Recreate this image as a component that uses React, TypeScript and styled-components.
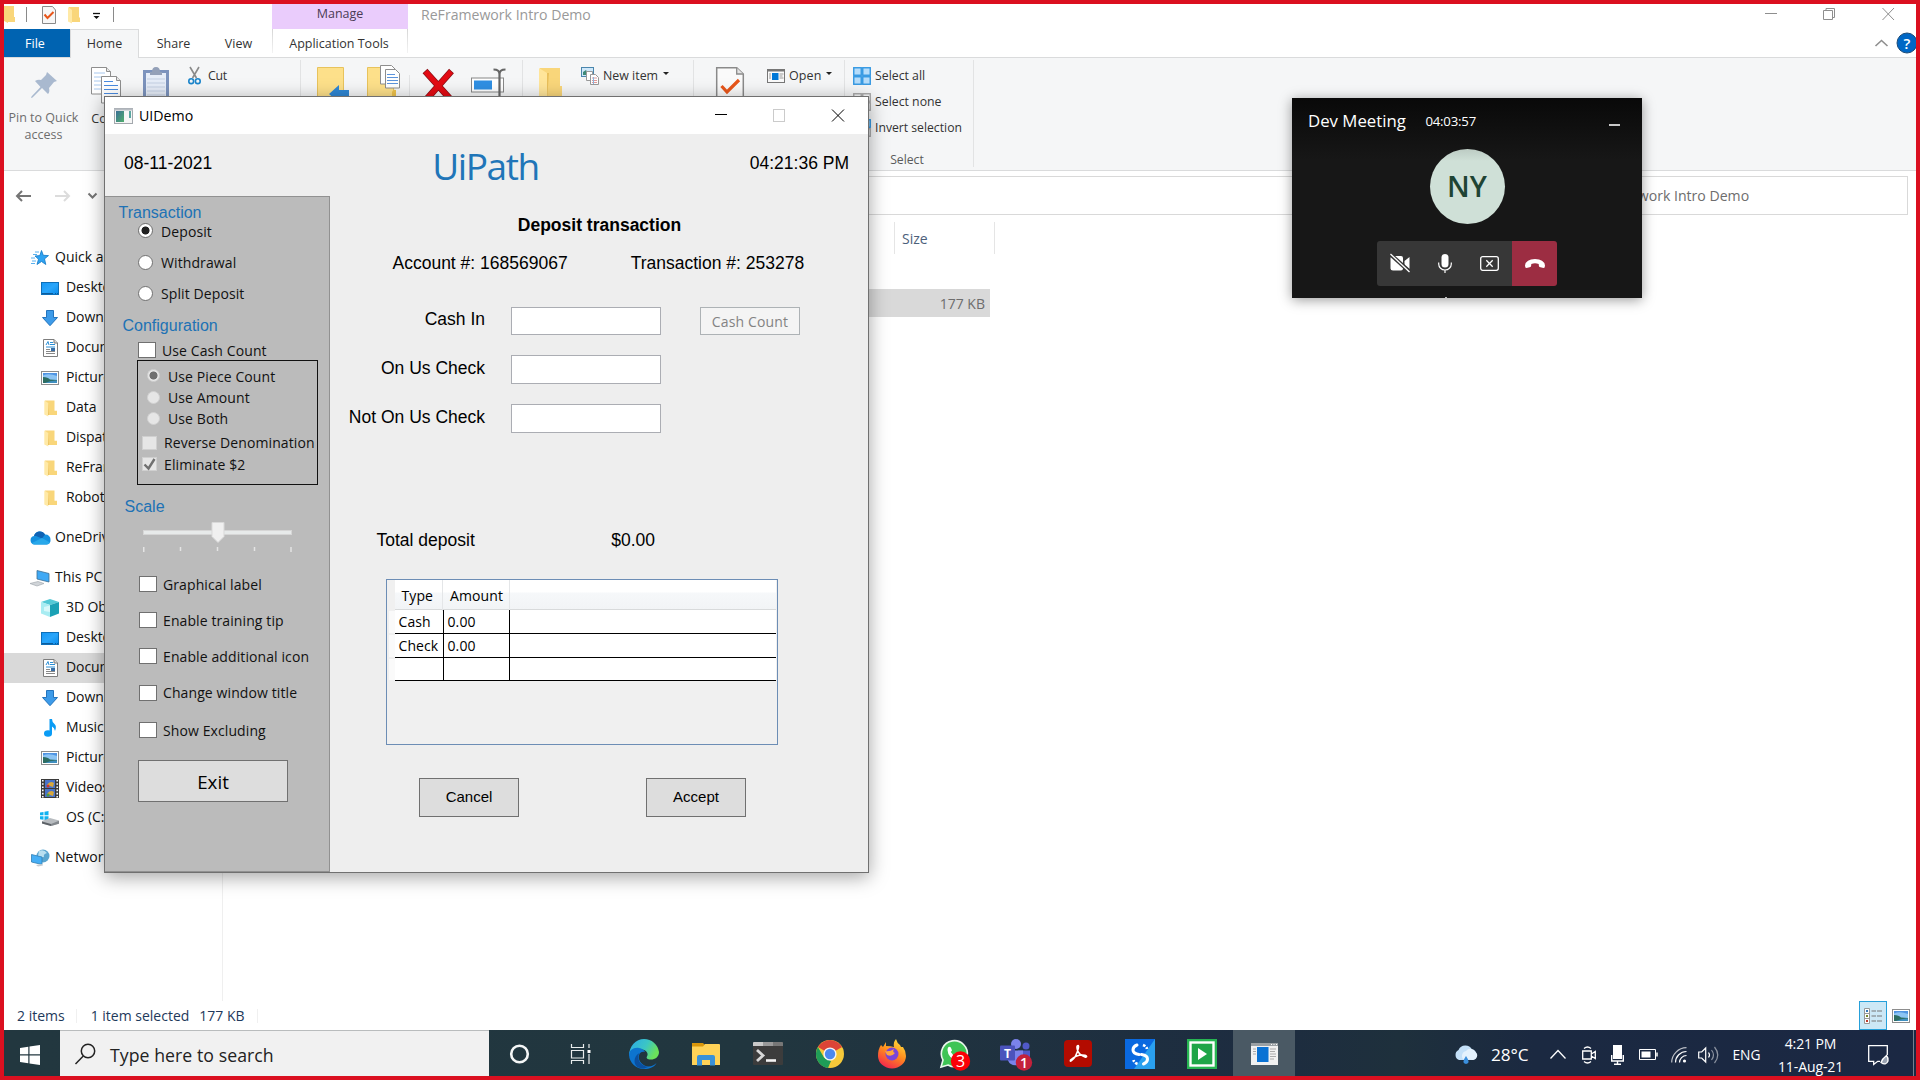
import React from 'react';
import styled, { createGlobalStyle, css } from 'styled-components';

const segoe = `"Open Sans", "Noto Sans", sans-serif`;
const arial = `"Liberation Sans", Arial, sans-serif`;

const GlobalStyle = createGlobalStyle`
  * { box-sizing: border-box; }
  html, body { margin: 0; padding: 0; }
  body { width: 1920px; height: 1080px; overflow: hidden; background: #fff; font-family: ${segoe}; }
`;

/* ---------- shared pieces ---------- */

const Screen = styled.div`
  position: relative;
  width: 1920px;
  height: 1080px;
  border: 4px solid #db1020;
  background: #fff;
  display: flex;
  flex-direction: column;
  overflow: hidden;
  color: #000;
  font: 14px/20px ${segoe};
`;

const Glyph = styled.svg`
  display: block;
  flex: none;
  overflow: visible;
`;

const Label = styled.span<{ $size?: number; $ls?: number; $color?: string; $arial?: boolean; $ml?: number }>`
  display: block;
  flex: none;
  white-space: nowrap;
  font-family: ${p => (p.$arial ? arial : segoe)};
  font-size: ${p => p.$size ?? 14}px;
  letter-spacing: ${p => p.$ls ?? 0}px;
  color: ${p => p.$color ?? 'inherit'};
  margin-left: ${p => p.$ml ?? 0}px;
`;

/* ---------- explorer: title and tabs ---------- */

const TopStrip = styled.header`
  display: flex;
  height: 54px;
  flex: none;
  border-bottom: 1px solid #dadbdc;
`;

const LeftStrip = styled.div`
  width: 268px;
  display: flex;
  flex-direction: column;
`;

const QuickTools = styled.div`
  height: 25px;
  display: flex;
  align-items: flex-start;
`;

const Tabs = styled.nav`
  display: flex;
  height: 29px;
`;

const Tab = styled.div<{ $w: number; $kind?: 'file' | 'active' }>`
  width: ${p => p.$w}px;
  height: ${p => (p.$kind === 'file' ? 28 : 29)}px;
  line-height: 29px;
  text-align: center;
  font-size: 12.5px;
  color: #333;
  ${p => p.$kind === 'file' && css`background: #0063b1; color: #fff; padding-right: 4px;`}
  ${p => p.$kind === 'active' && css`background: #f5f6f7; border: 1px solid #dadbdc; border-bottom: 0; line-height: 28px;`}
`;

const ContextTab = styled.div`
  width: 136px;
  text-align: center;
  font-size: 12.5px;
  color: #333;
`;

const ContextHead = styled.div`
  height: 25px;
  line-height: 20px;
  background: #eaccfc;
  color: #4a3b54;
`;

const ContextName = styled.div`
  height: 24px;
  line-height: 29px;
  padding-right: 2px;
  white-space: nowrap;
  border-left: 1px solid;
  border-right: 1px solid;
  border-image: linear-gradient(#d5d5d5, #f4f4f4) 1;
`;

const WindowTitle = styled.div`
  margin-left: 13px;
  line-height: 21px;
  font-size: 14.1px;
  color: #999;
  flex: 1;
`;

const Corner = styled.div`
  width: 160px;
  display: flex;
  flex-direction: column;
  align-items: flex-end;
`;

/* ---------- explorer: ribbon ---------- */

const Ribbon = styled.section`
  display: flex;
  height: 113px;
  flex: none;
  background: #f5f6f7;
  border-bottom: 1px solid #dadbdc;
  color: #333;
`;

const Group = styled.div<{ $w: number; $pl?: number }>`
  width: ${p => p.$w}px;
  height: 107px;
  margin-top: 2px;
  padding-left: ${p => p.$pl ?? 0}px;
  border-right: 1px solid #e2e3e4;
  display: flex;
  align-items: flex-start;
`;

const BigButton = styled.div<{ $w: number; $pt?: number }>`
  width: ${p => p.$w}px;
  height: 107px;
  padding-top: ${p => p.$pt ?? 7}px;
  display: flex;
  flex-direction: column;
  align-items: center;
  font-size: 12.5px;
  line-height: 17px;
  text-align: center;
  flex: none;
`;

const Caption = styled.div<{ $mt: number; $color?: string }>`
  margin-top: ${p => p.$mt}px;
  color: ${p => p.$color ?? '#333'};
  white-space: nowrap;
`;

const SmallStack = styled.div<{ $pl?: number }>`
  display: flex;
  flex-direction: column;
  padding: 3px 0 0 ${p => p.$pl ?? 0}px;
  flex: none;
`;

const SmallButton = styled.div<{ $gap?: number }>`
  height: 26px;
  display: flex;
  align-items: center;
  gap: ${p => p.$gap ?? 4}px;
  font-size: 12.5px;
  white-space: nowrap;
`;

const GroupName = styled.div`
  margin-top: 9px;
  width: 108px;
  text-align: center;
  font-size: 12.2px;
  line-height: 20px;
  color: #5a5a5a;
`;

const Caret = styled.i`
  width: 0;
  height: 0;
  margin: -6px 0 0 1px;
  border: 3.5px solid transparent;
  border-top-color: #222;
  border-bottom: 0;
`;

/* ---------- explorer: address and files ---------- */

const AddressRow = styled.div`
  height: 47px;
  flex: none;
  display: flex;
  align-items: flex-start;
  padding: 5px 8px 0 0;
`;

const History = styled.div`
  width: 130px;
  height: 39px;
  display: flex;
  align-items: center;
  padding-left: 12px;
`;

const Field = styled.div<{ $w?: number }>`
  height: 39px;
  border: 1px solid #d9d9d9;
  line-height: 37px;
  padding-left: 40px;
  color: #6d6d6d;
  white-space: nowrap;
  ${p => (p.$w ? css`width: ${p.$w}px; flex: none; font-size: 14.1px;` : css`flex: 1;`)}
`;

const Files = styled.main`
  flex: 1;
  display: flex;
  min-height: 0;
`;

const Tree = styled.aside`
  width: 219px;
  padding-top: 25px;
  border-right: 1px solid #efefef;
`;

const TreeRow = styled.div<{ $level: number; $gap?: boolean; $on?: boolean }>`
  height: 30px;
  margin-top: ${p => (p.$gap ? 10 : 0)}px;
  display: flex;
  align-items: center;
  padding-left: ${p => (p.$level ? 36 : 26)}px;
  gap: ${p => (p.$level ? 6 : 5)}px;
  background: ${p => (p.$on ? '#d9d9d9' : 'transparent')};
  letter-spacing: ${p => (p.$level ? -0.1 : 0)}px;
  color: #111;
`;

const TreeName = styled.span`
  padding-bottom: 2px;
  line-height: 20px;
  white-space: nowrap;
`;

const TreeIcon = styled.span`
  width: 20px;
  display: flex;
  justify-content: center;
`;

const List = styled.div`
  flex: 1;
`;

const ListHead = styled.div`
  margin-top: 4px;
  padding-left: 671px;
  height: 32px;
  display: flex;
`;

const SizeHead = styled.div`
  width: 101px;
  border-left: 1px solid #e5e5e5;
  border-right: 1px solid #e5e5e5;
  padding-left: 7px;
  line-height: 33px;
  color: #4c607a;
`;

const FileRow = styled.div`
  margin-top: 35px;
  width: 767px;
  height: 28px;
  line-height: 29px;
  padding-right: 5px;
  text-align: right;
  background: #d9d9d9;
  color: #6d6d6d;
`;

const StatusBar = styled.footer`
  height: 29px;
  flex: none;
  display: flex;
  align-items: center;
  padding-left: 13px;
  color: #1e395b;
`;

const StatusRule = styled.i<{ $m: string }>`
  width: 1px;
  height: 14px;
  margin: ${p => p.$m};
  background: #f0f0f0;
`;

const ViewButton = styled.div`
  margin-left: auto;
  width: 28px;
  height: 29px;
  border: 1px solid #26a0da;
  background: #cce8f6;
  display: flex;
  align-items: center;
  justify-content: center;
`;

const ThumbButton = styled.div`
  width: 29px;
  padding-left: 5px;
`;

/* ---------- taskbar ---------- */

const Taskbar = styled.div`
  height: 46px;
  flex: none;
  display: flex;
  background: linear-gradient(90deg, #22373f 0%, #21363f 40%, #1d2c40 66%, #1e303c 73%, #1b2941 80%, #1b2843 100%);
  color: #fff;
`;

const StartButton = styled.div`
  width: 56px;
  padding: 15px 0 0 16px;
`;

const SearchBox = styled.div`
  width: 429px;
  background: #f1f1f1;
  border-top: 1px solid #b9bcbd;
  display: flex;
  align-items: center;
  padding: 2px 0 0 15px;
  color: #222;
`;

const AppCell = styled.div<{ $on?: boolean }>`
  width: 62px;
  display: flex;
  align-items: center;
  justify-content: center;
  padding-top: 1px;
  background: ${p => (p.$on ? '#4a5964' : 'transparent')};
`;

const Tray = styled.div`
  flex: 1;
  display: flex;
  align-items: center;
  padding: 3px 0 0 158px;
`;

const Slot = styled.div<{ $w: number }>`
  width: ${p => p.$w}px;
  flex: none;
  display: flex;
`;

const Clock = styled.div`
  width: 100px;
  height: 46px;
  text-align: center;
  font-size: 14px;
  line-height: 23px;
  margin: -4px 7px 0 0;
  padding-top: 2px;
  letter-spacing: -0.1px;
`;

const DesktopEdge = styled.i`
  margin: -3px 0 0 auto;
  width: 3px;
  height: 46px;
  border-left: 1px solid #76808f;
`;

/* ---------- UIDemo window ---------- */

const DemoWindow = styled.div`
  position: absolute;
  left: 100px;
  top: 92px;
  width: 765px;
  height: 777px;
  border: 1px solid #707070;
  background: #eee;
  box-shadow: 0 4px 18px rgba(0, 0, 0, 0.36);
  display: flex;
  flex-direction: column;
`;

const DemoTitle = styled.div`
  height: 37px;
  flex: none;
  background: #fff;
  display: flex;
  align-items: center;
  padding: 0 23px 0 9px;
`;

const TitleControls = styled.div`
  margin-left: auto;
`;

const DemoHeader = styled.div`
  height: 62px;
  flex: none;
  display: flex;
  align-items: center;
  padding: 0 19px 4px 19px;
`;

const Logo = styled.div`
  margin: 5px 0 0 220px;
  font-size: 37px;
  line-height: 50px;
  letter-spacing: -1.4px;
  color: #2075b8;
`;

const TimeLabel = styled.div`
  margin-left: auto;
  font: 17.5px/20px ${arial};
  white-space: nowrap;
`;

const DemoBody = styled.div`
  flex: 1;
  display: flex;
  min-height: 0;
`;

const Panel = styled.div`
  width: 225px;
  background: #bbb;
  border: 1px solid #919191;
  border-left: 0;
  display: flex;
  flex-direction: column;
`;

const Heading = styled.div<{ $mt: number; $ml: number }>`
  margin: ${p => p.$mt}px 0 0 ${p => p.$ml}px;
  height: 20px;
  font: 16px/20px ${arial};
  color: #2072b5;
`;

const Option = styled.div<{ $mt: number; $ml: number; $gap: number; $up?: boolean }>`
  margin: ${p => p.$mt}px 0 0 ${p => p.$ml}px;
  height: 16px;
  display: flex;
  align-items: flex-start;
  gap: ${p => p.$gap}px;
  line-height: ${p => (p.$up ? 16 : 18)}px;
  letter-spacing: 0.1px;
  white-space: nowrap;
  color: #111;
`;

const Radio = styled.i<{ $on?: boolean; $dim?: boolean }>`
  width: ${p => (p.$dim ? 13 : 15)}px;
  height: ${p => (p.$dim ? 13 : 15)}px;
  margin-top: ${p => (p.$dim ? 1 : 0)}px;
  flex: none;
  border-radius: 50%;
  border: 1px solid ${p => (p.$dim ? '#d2d2d2' : '#707070')};
  background: ${p => {
    const base = p.$dim ? '#e6e6e6' : '#fff';
    const dot = p.$dim ? '#707070' : '#212121';
    return p.$on ? `radial-gradient(circle, ${dot} 0 3.6px, ${base} 4.4px)` : base;
  }};
`;

const Check = styled.i<{ $dim?: boolean }>`
  width: ${p => (p.$dim ? 15 : 18)}px;
  height: ${p => (p.$dim ? 14 : 16)}px;
  margin-top: ${p => (p.$dim ? 1 : 0)}px;
  flex: none;
  display: block;
  border: 1px solid ${p => (p.$dim ? '#d0d0d0' : '#707070')};
  background: ${p => (p.$dim ? '#e6e6e6' : '#fff')};
`;

const SubBox = styled.div`
  margin: 2px 0 0 32px;
  width: 181px;
  height: 125px;
  flex: none;
  border: 1px solid #111;
`;

const SliderSlot = styled.div`
  margin: 5px 0 0 38px;
  height: 32px;
  flex: none;
`;

const Button = styled.div<{ $w: number; $h: number; $kind?: 'exit' | 'dim' }>`
  width: ${p => p.$w}px;
  height: ${p => p.$h}px;
  flex: none;
  display: flex;
  align-items: center;
  justify-content: center;
  padding: 0 0 2px 0;
  background: #ddd;
  border: 1px solid #707070;
  font: 15px/20px ${arial};
  ${p => p.$kind === 'exit' && css`margin: 22px 0 0 33px; padding: 1px 0 0 0; font: 18.8px/24px ${segoe};`}
  ${p => p.$kind === 'dim' && css`padding: 2px 0 0 0; background: #f4f4f4; border-color: #adb2b5; color: #838383; font: 14px/20px ${segoe}; letter-spacing: 0.15px;`}
`;

const Form = styled.div`
  flex: 1;
  display: flex;
  flex-direction: column;
  font: 17.5px/20px ${arial};
`;

const FormTitle = styled.div`
  margin: 19px 0 0 1px;
  text-align: center;
  font-weight: 700;
`;

const Line = styled.div<{ $mt: number; $pl: number }>`
  margin-top: ${p => p.$mt}px;
  padding-left: ${p => p.$pl}px;
  display: flex;
  white-space: nowrap;
`;

const Entry = styled.div<{ $mt: number; $h: number }>`
  margin-top: ${p => p.$mt}px;
  height: ${p => p.$h}px;
  display: grid;
  grid-template-columns: 155px 150px 100px;
  column-gap: 26px;
`;

const EntryLabel = styled.label<{ $low?: boolean }>`
  text-align: right;
  line-height: ${p => (p.$low ? 27 : 25)}px;
  white-space: nowrap;
`;

const Input = styled.div`
  background: #fff;
  border: 1px solid #abadb3;
`;

const DimSlot = styled.div`
  padding-left: 13px;
`;

const Grid = styled.div`
  margin: 29px 0 0 56px;
  width: 392px;
  height: 166px;
  flex: none;
  border: 1px solid #6c8db5;
  background: #f0f0f0;
  padding: 0 1px 0 8px;
  font: 14px/20px ${segoe};
`;

const GridHead = styled.div`
  height: 30px;
  display: grid;
  grid-template-columns: 48px 67px 1fr;
  background: linear-gradient(#fff 0 12px, #f6f8fa 13px, #f2f4f6);
  border-bottom: 1px solid #d8dadb;
`;

const GridHeadCell = styled.div`
  border-right: 1px solid #e4e6e8;
  padding-left: 6.5px;
  line-height: 31px;
  letter-spacing: 0.1px;
  & + & { padding-left: 7px; }
  &:last-child { border-right: 0; }
`;

const GridRow = styled.div`
  height: 24px;
  display: grid;
  grid-template-columns: 49px 66px 1fr;
  background: #fff;
  border-bottom: 1px solid #000;
  box-shadow: -7px 0 0 -1px #fafafa;
  &:last-child { height: 23px; }
`;

const GridCell = styled.div`
  border-right: 1px solid #000;
  padding-left: 3.5px;
  line-height: 24px;
  letter-spacing: 0.1px;
  &:last-child { border-right: 0; }
`;

const Actions = styled.div`
  margin-top: 33px;
  padding-left: 89px;
  display: flex;
  gap: 127px;
`;

/* ---------- meeting window ---------- */

const Meeting = styled.div`
  position: absolute;
  left: 1288px;
  top: 94px;
  width: 350px;
  height: 200px;
  background: linear-gradient(#090909, #171717 62px);
  box-shadow: 0 2px 12px rgba(0, 0, 0, 0.4);
  color: #fff;
  display: flex;
  flex-direction: column;
  align-items: center;
`;

const MeetingHead = styled.div`
  width: 100%;
  height: 51px;
  display: flex;
  align-items: center;
  padding: 0 22px 6px 16px;
`;

const Minimise = styled.i`
  margin: 9px 0 0 auto;
  width: 11px;
  height: 2px;
  background: #c8c8c8;
`;

const Avatar = styled.div`
  width: 75px;
  height: 75px;
  border-radius: 50%;
  background: linear-gradient(#bccbc3, #cfe0d7 12px);
  color: #1f4433;
  font: 600 29px/74px ${segoe};
  text-align: center;
`;

const CallBar = styled.div`
  margin-top: 17px;
  display: flex;
  border-radius: 3px;
  overflow: hidden;
`;

const CallButton = styled.div<{ $end?: boolean }>`
  width: 45px;
  height: 45px;
  display: flex;
  align-items: center;
  justify-content: center;
  background: ${p => (p.$end ? '#9c2d42' : '#373737')};
`;

const Handle = styled.i`
  width: 2px;
  height: 1px;
  margin: auto 43px 0 0;
  background: #bbb;
`;

/* ---------- drawings ---------- */

const FolderIcon = () => (
  <Glyph width="13" height="17">
    <path d="M1 .5h9.500v10.200H13V15H1z" fill="#f9d67a" />
    <path d="M.3.5 4.300 3v13.600L.3 14.600z" fill="#ffe9a6" />
    <path d="M4.300 3 5 15H4.300z" fill="#e3b64f" />
  </Glyph>
);

const LargeFolder = () => (
  <Glyph width="24" height="40">
    <path d="M1 8h20v18h2v14H1z" fill="#f9d67a" />
    <path d="m0 8 8 5v27H0z" fill="#ffe59a" />
    <path d="M8 13v27l2-27z" fill="#e9bf5a" />
  </Glyph>
);

const PageCheck = () => (
  <Glyph width="28" height="36">
    <path d="M.7.7h20L27.300 7v28.300H.7z" fill="#fafafa" stroke="#8a8a8a" strokeWidth="1.500" />
    <path d="M20.700.7V7h6.600" fill="#e4e4e4" stroke="#8a8a8a" strokeWidth="1.300" />
    <path d="m5.500 19 5.500 6L23 13" fill="none" stroke="#e8561a" strokeWidth="3.200" />
  </Glyph>
);

const PageStack = () => (
  <Glyph width="30" height="36">
    <path d="M.5.5h15l4 4V27H.5z" fill="#fff" stroke="#8e8e8e" />
    <path d="M15.500.5v4h4" fill="#e8e8e8" stroke="#8e8e8e" />
    <path d="M3 6h11M3 10h13M3 14h13M3 18h8M3 22h8" stroke="#a8c8ee" />
    <path d="M10.500 9.500h15l4 4V36h-19z" fill="#fff" stroke="#8e8e8e" />
    <path d="M25.500 9.500v4h4" fill="#e8e8e8" stroke="#8e8e8e" />
    <path d="M13 14.500h9M13 18.500h14M13 22.500h14M13 26.500h14M13 30.500h14" stroke="#4a8be0" strokeWidth="1.200" />
  </Glyph>
);

const MonitorIcon = () => (
  <Glyph width="18" height="13">
    <defs><linearGradient id="mon" x1="0" y1="0" x2="1" y2="1"><stop offset="0" stopColor="#1496f5" /><stop offset=".5" stopColor="#2aa6fb" /><stop offset="1" stopColor="#0a8ceb" /></linearGradient></defs>
    <rect x=".5" y=".5" width="17" height="12" fill="url(#mon)" stroke="#0e6fb8" />
    <path d="M1 11.500h11M14 11.500h1M16 11.500h1" stroke="#0b5c9c" />
  </Glyph>
);

const DownIcon = () => (
  <Glyph width="16" height="16"><path d="M4.500.5h7v7h4L8 15.700.5 7.500h4z" fill="#3d9be9" stroke="#2474bd" /></Glyph>
);

const DocIcon = () => (
  <Glyph width="15" height="18">
    <path d="M.5.5h10.500L14.500 4v13.500H.5z" fill="#fff" stroke="#7d7d7d" />
    <path d="M11 .5V4h3.500" fill="#ddd" stroke="#7d7d7d" />
    <path d="M3 6 5 2.500 6 6M7 3.500h3M7 5.500h5M3 8h9" stroke="#2b8fd6" fill="none" />
    <path d="M3 10.500h4M3 12.500h9M3 14.500h9" stroke="#888" />
    <rect x="8" y="9" width="4" height="3" fill="#3a6ea5" />
  </Glyph>
);

const PictureIcon = () => (
  <Glyph width="18" height="14">
    <rect x=".5" y=".5" width="17" height="13" fill="#fff" stroke="#8d8d8d" />
    <rect x="2" y="2" width="14" height="10" fill="#8cc4f4" />
    <path d="M2 4.500q6-2.500 14 .5V2H2z" fill="#4f94e2" />
    <path d="M2 6q5 0 7 2.500l7 .5v3H2z" fill="#2c6d62" />
    <path d="M4 12q6-3 12-2.500V12z" fill="#3f8fc0" />
  </Glyph>
);

const StarIcon = () => (
  <Glyph width="18" height="16">
    <path d="m10.500.5 1.800 4.800 5.200.3-4 3.300 1.300 5.600-4.300-3-4.500 3 1.500-5.300L4 6l4.800-.4z" fill="#2ea3f2" stroke="#1478c4" strokeWidth=".8" />
    <path d="M4 2h4M2 4.500h4M0 8h4M1 11h4M0 13.500h4" stroke="#58b0ee" />
  </Glyph>
);

const CloudIcon = () => (
  <Glyph width="21" height="14">
    <path d="M4.500 13.500A4.300 4.300 0 0 1 4 5a6 6 0 0 1 11-1.500 5 5 0 0 1 5.500 5.500 4 4 0 0 1-3.500 4.500z" fill="#1490df" />
    <path d="M4 5a6 6 0 0 1 11-1.500l-3 4L6 5z" fill="#0f62b4" />
    <path d="m2 12 10-5 8 4.500q-1 2-3.500 2h-12q-1.500 0-2.500-1.500z" fill="#28a8ea" />
  </Glyph>
);

const PcIcon = () => (
  <Glyph width="20" height="17">
    <path d="M7 .5 19 3.500V12L7 9z" fill="#3fa9f5" stroke="#3d6f93" strokeWidth=".8" />
    <path d="M0 13.500 8 11.500l6 2-7 2.500z" fill="#d0d4d8" stroke="#9aa1a8" strokeWidth=".6" />
  </Glyph>
);

const CubeIcon = () => (
  <Glyph width="18" height="18">
    <path d="m0 3 9-3 9 3-9 3z" fill="#54c9d6" />
    <path d="m0 3 9 3v12l-9-3.500z" fill="#a8ecf2" />
    <path d="m18 3-9 3v12l9-3.500z" fill="#1ba1b5" />
    <path d="m3 8 6-1.500V13L3 12z" fill="#d8f8fa" />
  </Glyph>
);

const MusicIcon = () => (
  <Glyph width="12" height="18"><ellipse cx="4" cy="14.500" rx="4" ry="3.200" fill="#0a9cf5" /><path d="M5.500 0H8q0 3 2.500 5T11 12q-.5-3.500-3-4.500v7H5.500z" fill="#0a9cf5" /></Glyph>
);

const VideoIcon = () => (
  <Glyph width="18" height="19">
    <rect width="18" height="19" fill="#3a3a3a" /><rect x="4" y="1" width="10" height="8" fill="#4a74c9" /><rect x="4" y="10" width="10" height="8" fill="#4a74c9" />
    <path d="M6 6q3-5 7-2l-1 4zM6 15q3-5 7-2l-1 4z" fill="#d8a83c" /><circle cx="7" cy="7" r="1.500" fill="#c33" /><circle cx="7" cy="16" r="1.500" fill="#4c9c3c" />
    <path d="M1.800 1v18M16.200 1v18" stroke="#fff" strokeWidth="1.600" strokeDasharray="1.600 1.600" />
  </Glyph>
);

const DriveIcon = () => (
  <Glyph width="20" height="15">
    <path d="M0 1.500 3.500 1v3.300H0zM4.500.8 8.500 0v4.300h-4zM0 5.300h3.500V8.800L0 8.300zM4.500 5.300h4V9.500l-4-.6z" fill="#10b2f0" />
    <path d="m2 10 8-3 9 2.500v3L11 15l-9-2.500z" fill="#b8bcc0" /><path d="m2 10.500 9 2.500v2l-9-2.500z" fill="#5c6166" /><path d="m11 13 8-3.300v3L11 15z" fill="#83888d" />
  </Glyph>
);

const NetworkIcon = () => (
  <Glyph width="19" height="18">
    <circle cx="12" cy="7" r="6.500" fill="#5aa5cf" /><path d="M8 2q5-2 8 2-4 1-3 4-4 1-6-1z" fill="#b9dff0" />
    <path d="M.5 5.500 11 8v7.500L.5 13z" fill="#45aef5" stroke="#2f7db4" strokeWidth=".8" /><path d="m5 16 6-1 1 1.500-5 1z" fill="#c6ccd0" />
  </Glyph>
);

const treeItems: { name: string; icon: React.ReactNode; level: number; gap?: boolean; on?: boolean }[] = [
  { name: 'Quick access', icon: <StarIcon />, level: 0 },
  { name: 'Desktop', icon: <MonitorIcon />, level: 1 },
  { name: 'Downloads', icon: <DownIcon />, level: 1 },
  { name: 'Documents', icon: <DocIcon />, level: 1 },
  { name: 'Pictures', icon: <PictureIcon />, level: 1 },
  { name: 'Data', icon: <FolderIcon />, level: 1 },
  { name: 'Dispatcher', icon: <FolderIcon />, level: 1 },
  { name: 'ReFramework', icon: <FolderIcon />, level: 1 },
  { name: 'Robots', icon: <FolderIcon />, level: 1 },
  { name: 'OneDrive', icon: <CloudIcon />, level: 0, gap: true },
  { name: 'This PC', icon: <PcIcon />, level: 0, gap: true },
  { name: '3D Objects', icon: <CubeIcon />, level: 1 },
  { name: 'Desktop', icon: <MonitorIcon />, level: 1 },
  { name: 'Documents', icon: <DocIcon />, level: 1, on: true },
  { name: 'Downloads', icon: <DownIcon />, level: 1 },
  { name: 'Music', icon: <MusicIcon />, level: 1 },
  { name: 'Pictures', icon: <PictureIcon />, level: 1 },
  { name: 'Videos', icon: <VideoIcon />, level: 1 },
  { name: 'OS (C:)', icon: <DriveIcon />, level: 1 },
  { name: 'Network', icon: <NetworkIcon />, level: 0, gap: true },
];

const SelectIcon = ({ kind }: { kind: 'all' | 'none' | 'invert' }) => {
  const cells = [[0, 0], [9, 0], [0, 9], [9, 9]];
  return (
    <Glyph width="18" height="18">
      {cells.map(([x, y], i) => {
        const blue = kind === 'all' || (kind === 'invert' && i === 1);
        return <rect key={i} x={x + 0.75} y={y + 0.75} width="7.5" height="7.5" fill={blue ? '#b5dcfa' : '#f5f6f7'} stroke={blue ? '#3297e2' : '#a8a8a8'} strokeWidth="1.4" />;
      })}
    </Glyph>
  );
};

const NewItemIcon = () => (
  <Glyph width="18" height="18">
    <rect x=".5" y=".5" width="12" height="9" fill="#cfe8fa" stroke="#4a86ad" /><path d="M2 8V5l3-2 3 5z" fill="#3d8a78" />
    <path d="M5.500 4.500h6v9h-6z" fill="#fff" stroke="#999" /><path d="M9.500 7.500h5l3 3v7h-8z" fill="#fff" stroke="#999" />
    <path d="M11 11h5M11 13.500h5M11 15.500h5" stroke="#e09a9a" /><path d="M12.500 10v7" stroke="#8ab6e0" />
  </Glyph>
);

const OpenIcon = () => (
  <Glyph width="18" height="14">
    <rect x=".5" y=".5" width="17" height="13" fill="#fafafa" stroke="#777" /><path d="M0 1.500h18" stroke="#777" strokeWidth="2" />
    <rect x="5" y="4" width="6.500" height="7" fill="#0078d7" /><path d="M2 5h2M2 7h2M2 9h2M12.500 5h4M12.500 7h3M12.500 9h4" stroke="#999" />
  </Glyph>
);

const appIcons: { id: string; on?: boolean; icon: React.ReactNode }[] = [
  { id: 'cortana', icon: <Glyph width="20" height="20"><circle cx="9.500" cy="10" r="8.300" fill="none" stroke="#f4f6f6" strokeWidth="2.600" /></Glyph> },
  { id: 'tasks', icon: (
    <Glyph width="25" height="20" stroke="#e8ecec" fill="none">
      <path d="M1.500 0v3.500h12V0M1.500 20v-3.500h12V20M1.500 6.500h12v7.500h-12zM19 0v4M19 10v10" strokeWidth="1.200" /><rect x="17.500" y="6" width="3" height="3" fill="#fff" stroke="none" />
    </Glyph>) },
  { id: 'edge', icon: (
    <Glyph width="30" height="30" viewBox="0 0 30 30">
      <defs><linearGradient id="eg" x1="0" y1="0" x2="1" y2=".4"><stop offset="0" stopColor="#2aa9ea" /><stop offset=".6" stopColor="#3cc6c4" /><stop offset="1" stopColor="#6be25a" /></linearGradient></defs>
      <path d="M15 0a15 15 0 0 1 15 13c0 5-4 7.500-8 7.500-4 0-5-1.500-4-3 2-3-1-7-5-7C7 10.500 1 14 0 17 0 7 7 0 15 0z" fill="url(#eg)" />
      <path d="M0 16c0-5 5-8 10-7 3 .5 5 2 6 4-4-1.500-7 2-6 7 1 4 5 7 9 7.500 3 .3 6-1 8.500-3.500-2 4-7 6-12.500 6A15 15 0 0 1 0 16z" fill="#0d74cf" />
      <path d="M10.500 14C7 19 11 27 19 28c-3 2-9 2.500-12-1.500-3-4-1-10.500 3.500-12.500z" fill="#0b4f9e" />
    </Glyph>) },
  { id: 'explorer', icon: (
    <Glyph width="28" height="24">
      <path d="M0 1h11l3 3v3H0z" fill="#d9960a" /><path d="M0 4.500h11L13 2h14q1 0 1 1v20H0z" fill="#ffd257" />
      <path d="M5 23.500V15q0-2 2-2h14q2 0 2 2v8.500h-5V18h-8v5.500z" fill="#3a91d8" />
    </Glyph>) },
  { id: 'terminal', icon: (
    <Glyph width="30" height="23">
      <rect width="30" height="23" rx="1" fill="#3c3c3c" /><path d="M0 1q0-1 1-1h9v4H0z" fill="#c9c9c9" /><path d="M10 0h10v4H10z" fill="#999" /><path d="M20 0h9q1 0 1 1v3H20z" fill="#777" />
      <path d="m4 8 6 5.500L4 19" fill="none" stroke="#d8d8d8" strokeWidth="2.800" /><path d="M13 18.500h10" stroke="#f4f4f4" strokeWidth="2.600" />
    </Glyph>) },
  { id: 'chrome', icon: (
    <Glyph width="28" height="28" viewBox="0 0 28 28">
      <circle cx="14" cy="14" r="14" fill="#f6c93a" />
      <path d="M14 14 1.900 7A14 14 0 0 1 26.100 7z" fill="#dc4437" />
      <path d="M1.900 7 8 17.500l7 3.500-3 7A14 14 0 0 1 1.900 7z" fill="#1f9d57" />
      <circle cx="14" cy="14" r="6.600" fill="#f4f6f6" /><circle cx="14" cy="14" r="5.200" fill="#4a89f0" />
    </Glyph>) },
  { id: 'firefox', icon: (
    <Glyph width="28" height="29" viewBox="0 0 28 29">
      <defs><linearGradient id="ff" x1=".8" y1="0" x2=".3" y2="1"><stop offset="0" stopColor="#ffe23c" /><stop offset=".5" stopColor="#ff8a1e" /><stop offset="1" stopColor="#f5254e" /></linearGradient></defs>
      <path d="M3 6l2 2 3-5v4q5 0 8 1-1-5 2-8 1 4 4 6l1 2h2q3 4 3 9a14 12.500 0 0 1-28 0Q0 10 3 6z" fill="url(#ff)" />
      <circle cx="14" cy="15" r="6.500" fill="#7b45d8" /><path d="M7 12q5 1 9-2-2 3 1 4-3 4-8 2z" fill="#ffa63c" />
    </Glyph>) },
  { id: 'whatsapp', icon: (
    <Glyph width="30" height="30" viewBox="0 0 30 30">
      <path d="M2 28 4 21A13 13 0 1 1 9 26z" fill="#3fc455" stroke="#eaf6ec" strokeWidth="1.600" />
      <path d="M9.500 8q2-1 3 2l.5 1.500-1.200 1.600q2 3.500 5 4.400L19 16l4 2q-1 4-5 3.500Q9 19 8.500 11q0-2 1-3z" fill="#fff" />
      <circle cx="21.500" cy="22" r="9.700" fill="#fb0007" />
      <text x="21.500" y="27.500" fill="#fff" fontSize="16" textAnchor="middle" fontFamily="Open Sans, sans-serif">3</text>
    </Glyph>) },
  { id: 'teams', icon: (
    <Glyph width="32" height="30" viewBox="0 0 32 30">
      <circle cx="16" cy="5" r="5" fill="#7b83eb" /><circle cx="26" cy="7" r="3.500" fill="#5059c9" />
      <path d="M18 11.500h12v8a6 6 0 0 1-12 2z" fill="#5059c9" /><path d="M8 11.500h15v9a8 8 0 0 1-15 1z" fill="#7b83eb" />
      <rect y="6.500" width="15" height="15" rx="1" fill="#4b53bc" />
      <text x="7.500" y="18.500" fill="#fff" fontSize="12" fontWeight="700" textAnchor="middle" fontFamily="Open Sans, sans-serif">T</text>
      <circle cx="24" cy="23.500" r="8.200" fill="#c4213b" /><text x="24" y="28.500" fill="#fff" fontSize="14" fontWeight="600" textAnchor="middle" fontFamily="Open Sans, sans-serif">1</text>
    </Glyph>) },
  { id: 'acrobat', icon: (
    <Glyph width="28" height="27"><rect width="28" height="27" rx="4" fill="#b30b00" /><path d="M14 5.500q-1.800 0-.6 4.500 1.600 5 8.100 7.200 2.500-.6-.5-2Q13 14 6.500 20q-.8 2 1 .6 4.500-3 6.800-12.100.7-3-.3-3z" fill="none" stroke="#fff" strokeWidth="1.500" /></Glyph>) },
  { id: 'studio', icon: (
    <Glyph width="30" height="30">
      <rect width="30" height="30" fill="#0a69e0" /><path d="M30 0v30H9z" fill="#2aa0ef" />
      <path d="M12 6Q8 7.500 8 11q0 3.500 6 4.500M18.500 25Q22.500 23.500 22.500 20q0-3.500-6-4.500" fill="none" stroke="#fff" strokeWidth="3" strokeLinecap="round" />
      <path d="M18 6q3.500 1.500 4 4M12.500 25q-3.500-1.500-4-4" fill="none" stroke="#fff" strokeWidth="2.600" strokeDasharray="2.600 1.400" />
    </Glyph>) },
  { id: 'robot', icon: (
    <Glyph width="30" height="30"><rect width="30" height="30" fill="#27b552" /><rect x="3.500" y="3.500" width="23" height="23" fill="#1fa548" stroke="#fff" strokeWidth="2.400" /><path d="m11 9 9 6-9 6z" fill="#fff" /></Glyph>) },
  { id: 'demo', on: true, icon: (
    <Glyph width="27" height="22">
      <rect width="27" height="22" fill="#f1f1f1" /><path d="M0 1.500h27" stroke="#9aa0a4" strokeWidth="3" /><path d="M20 1.500h1M22.500 1.500h1M25 1.500h1" stroke="#fff" />
      <rect x="6" y="4" width="11.500" height="15" fill="#0a72d4" /><path d="M2 6h3M2 8.500h3M2 11h3M19 6h6M19 8.500h5M19 11h6M19 13.500h6M19 16h4" stroke="#aaa" />
    </Glyph>) },
];

/* ---------- composition ---------- */

const Explorer = () => (
  <>
    <TopStrip>
      <LeftStrip>
        <QuickTools>
          <Glyph width="268" height="25">
            <path d="M0 2h10v11h1v5H4v1L0 17z" fill="#f9d67a" />
            <path d="M22.500 3v15M109.500 3v15" stroke="#8a8a8a" />
            <path d="M38.500 2.500h10L51.500 6v13.500h-13z" fill="#f7f7f7" stroke="#8a8a8a" />
            <path d="m40.500 10.500 3 3.500 6-6" fill="none" stroke="#e8561a" strokeWidth="2" />
            <path d="M65 3h10v10.500h1V18H65z" fill="#f9d67a" /><path d="m64 3 4 3v13.500l-4-2z" fill="#ffe9a6" />
            <path d="M89 9.500h7" stroke="#111" strokeWidth="1.300" /><path d="M89.500 12h6l-3 3z" fill="#111" />
          </Glyph>
        </QuickTools>
        <Tabs>
          <Tab $w={66} $kind="file">File</Tab>
          <Tab $w={69} $kind="active">Home</Tab>
          <Tab $w={69}>Share</Tab>
          <Tab $w={61}>View</Tab>
        </Tabs>
      </LeftStrip>
      <ContextTab>
        <ContextHead>Manage</ContextHead>
        <ContextName>Application Tools</ContextName>
      </ContextTab>
      <WindowTitle>ReFramework Intro Demo</WindowTitle>
      <Corner>
        <Glyph width="160" height="53" fill="none" stroke="#8e8e8e">
          <path d="M9 9.500h12M67.500 6.500h9v9h-9zM70 6V4.500h8.500v9H77M126.500 4l11.500 12M138 4l-11.500 12" />
          <path d="m119.500 42 6-5.500 6 5.500" strokeWidth="1.600" />
          <circle cx="151" cy="39" r="10" fill="#0067c5" stroke="#1d4c78" />
          <text x="151" y="44.500" fill="#fff" stroke="none" fontSize="15" fontWeight="600" textAnchor="middle" fontFamily="Open Sans, sans-serif">?</text>
        </Glyph>
      </Corner>
    </TopStrip>

    <Ribbon>
      <Group $w={297}>
        <BigButton $w={79} $pt={12}>
          <Glyph width="26" height="26"><path d="m16 0 10 9-3 1-5 6q1 4-1 6l-6-6-9.500 9.500L0 26l.5-1.500L9.500 15 4 9q3-2 6-1l5-5z" fill="#a9b9cf" /></Glyph>
          <Caption $mt={11} $color="#6d6d6d">Pin to Quick<br />access</Caption>
        </BigButton>
        <BigButton $w={46}><PageStack /><Caption $mt={7}>Copy</Caption></BigButton>
        <BigButton $w={53}>
          <Glyph width="26" height="34">
            <rect x="0" y="3" width="26" height="31" fill="#7c93bd" /><rect x="3" y="6" width="20" height="28" fill="#e6edf8" /><path d="M9 5q0-5 4-5t4 5z" fill="#93a0b8" /><path d="M7 5h12v3H7z" fill="#93a0b8" />
            <path d="M4 12h18M4 16h18M4 20h18M4 24h18M4 28h18" stroke="#c3cfe2" />
          </Glyph>
        </BigButton>
        <SmallStack $pl={6}>
          <SmallButton $gap={7}>
            <Glyph width="13" height="18"><path d="M2 0 8.500 11M11 0 4.500 11" stroke="#8a8a8a" strokeWidth="1.600" /><circle cx="3.200" cy="14.200" r="2.400" fill="none" stroke="#1c86cc" strokeWidth="1.600" /><circle cx="9.800" cy="14.200" r="2.400" fill="none" stroke="#1c86cc" strokeWidth="1.600" /></Glyph>
            <Label $size={12.3} $ls={-0.3}>Cut</Label>
          </SmallButton>
        </SmallStack>
      </Group>
      <Group $w={222} $pl={16}>
        <Glyph width="200" height="50">
          <path d="M.5 7.500h26v40H.5z" fill="#fde08a" stroke="#e8c35c" /><path d="m12 34 10-9v5h10v9H22v4z" fill="#2f87d4" />
          <path d="M50.500 7.500h26v40h-26z" fill="#fde08a" stroke="#e8c35c" /><path d="M63.500 5.500h11l4 4V24h-15z" fill="#fff" stroke="#8e8e8e" /><path d="M68.500 9.500h10l4 4V28h-14z" fill="#fff" stroke="#8e8e8e" />
          <path d="M70 14.500h8M70 17.500h11M70 20.500h11M70 23.500h11" stroke="#5b93dc" /><path d="M75 32q1-3 4-2v12h-4z" fill="#eec24c" />
          <path d="M92.500 15v35" stroke="#e2e3e4" />
          <path d="m108 11 27 30M134.500 11 108 41" stroke="#8c1218" strokeWidth="6.500" /><path d="m108.500 11.500 26 29M134 11.500l-25.500 29" stroke="#e30b13" strokeWidth="5" />
          <rect x="154.500" y="18" width="32" height="14" fill="#fff" stroke="#888" /><rect x="157" y="20.500" width="18" height="9" fill="#2f8fe3" />
          <path d="M176.500 9.500q6 0 6 4.500 0-4.500 6-4.500M182.500 13v30" fill="none" stroke="#666" strokeWidth="2.200" />
        </Glyph>
      </Group>
      <Group $w={171} $pl={16}>
        <LargeFolder />
        <SmallStack $pl={18}>
          <SmallButton><NewItemIcon /><Label $size={12.4}>New item</Label><Caret /></SmallButton>
          <SmallButton><Glyph width="18" height="14"><path d="M2.500 2.500h9l3 3V14h-12z" fill="#fff" stroke="#888" /><path d="M0 5h6" stroke="#2474bd" strokeWidth="2" /></Glyph></SmallButton>
        </SmallStack>
      </Group>
      <Group $w={151} $pl={22}>
        <BigButton $w={28} $pt={7}><PageCheck /></BigButton>
        <SmallStack $pl={23}>
          <SmallButton><OpenIcon /><Label $size={12.5} $ls={0.1}>Open</Label><Caret /></SmallButton>
          <SmallButton><Glyph width="18" height="14"><path d="M2.500 3.500h9l3 3V14h-12z" fill="#dfe7f5" stroke="#a9b9d6" /></Glyph></SmallButton>
        </SmallStack>
      </Group>
      <Group $w={129} $pl={8}>
        <SmallStack>
          <SmallButton><SelectIcon kind="all" /><Label $size={12.3}>Select all</Label></SmallButton>
          <SmallButton><SelectIcon kind="none" /><Label $size={12.3}>Select none</Label></SmallButton>
          <SmallButton><SelectIcon kind="invert" /><Label $size={12.2}>Invert selection</Label></SmallButton>
          <GroupName>Select</GroupName>
        </SmallStack>
      </Group>
    </Ribbon>

    <AddressRow>
      <History>
        <Glyph width="82" height="12" fill="none" strokeWidth="2">
          <path d="M15 6H1M6 1 1 6l5 5" stroke="#757575" /><path d="M39 6h14M48 1l5 5-5 5" stroke="#dcdcdc" /><path d="m72.500 3.500 4 4 4-4" stroke="#757575" />
        </Glyph>
      </History>
      <Field />
      <Field $w={418}>Search ReFramework Intro Demo</Field>
    </AddressRow>

    <Files>
      <Tree>
        {treeItems.map((t, i) => (
          <TreeRow key={i} $level={t.level} $gap={t.gap} $on={t.on}>
            <TreeIcon>{t.icon}</TreeIcon><TreeName>{t.name}</TreeName>
          </TreeRow>
        ))}
      </Tree>
      <List>
        <ListHead><SizeHead>Size</SizeHead></ListHead>
        <FileRow>177 KB</FileRow>
      </List>
    </Files>

    <StatusBar>
      <Label>2 items</Label>
      <StatusRule $m="0 14px 0 11px" />
      <Label>1 item selected</Label>
      <Label $ml={10}>177 KB</Label>
      <StatusRule $m="0 0 0 12px" />
      <ViewButton>
        <Glyph width="18" height="16">
          <path d="M.5.5h5v15h-5zM0 5.500h6M0 10.500h6" fill="#fff" stroke="#999" /><path d="M7.500 3h4.500M13 3h5M7.500 8h4.500M13 8h5M7.500 13h4.500M13 13h5" stroke="#777" />
          <rect x="2" y="2" width="2" height="2" fill="#3778b8" /><rect x="2" y="7" width="2" height="2" fill="#7a8a2c" /><rect x="2" y="12" width="2" height="2" fill="#c0392b" />
        </Glyph>
      </ViewButton>
      <ThumbButton><PictureIcon /></ThumbButton>
    </StatusBar>
  </>
);

const TaskbarView = () => (
  <Taskbar>
    <StartButton><Glyph width="20" height="20" fill="#fff"><path d="M0 3 8.300 1.700V9.300H0zM9.500 1.500 20 0v9.300H9.500zM0 10.500h8.300v7.800L0 17zM9.500 10.500H20V20L9.500 18.500z" /></Glyph></StartButton>
    <SearchBox>
      <Glyph width="21" height="21" fill="none" stroke="#222" strokeWidth="1.500"><circle cx="13" cy="7" r="6.700" /><path d="M8.300 12 .5 20" /></Glyph>
      <Label $size={17.7} $ml={14} $ls={0.05}>Type here to search</Label>
    </SearchBox>
    {appIcons.map(a => <AppCell key={a.id} $on={a.on}>{a.icon}</AppCell>)}
    <Tray>
      <Slot $w={38}>
        <Glyph width="26" height="20"><path d="M6 15a5.500 5.500 0 0 1-.5-10A7.500 7.500 0 0 1 19 4.500 5.500 5.500 0 0 1 20 15z" fill="#c3e0f8" /><path d="M10 14a5 5 0 0 1 3-8 5.500 5.500 0 0 1 9.500 1A4.500 4.500 0 0 1 20 15z" fill="#e4f2fd" /><path d="M13 11q-5 7 0 8 5-1 0-8z" fill="#3b8fdd" /></Glyph>
      </Slot>
      <Label $size={17.2} $ls={-0.1}>28°C</Label>
      <Slot $w={22} />
      <Slot $w={32}><Glyph width="16" height="9"><path d="m.5 8.500 7.500-8 7.500 8" fill="none" stroke="#fff" strokeWidth="1.300" /></Glyph></Slot>
      <Slot $w={29}><Glyph width="14" height="18" fill="none" stroke="#fff" strokeWidth="1.300"><path d="M.7 5h8.600v8H.7zM9.300 8l4-2.500v7l-4-2.500M2 2.500q3.500-3 7 0M2 15.500q3.500 3 7 0" /></Glyph></Slot>
      <Slot $w={28}><Glyph width="13" height="20"><rect x="2" width="9" height="14" fill="#fff" /><path d="M.7 10v6h11.600v-6M6.500 16v3M3 19.300h7" fill="none" stroke="#fff" strokeWidth="1.400" /></Glyph></Slot>
      <Slot $w={32}><Glyph width="19" height="11"><path d="M.5.5h16v10H.5z" fill="none" stroke="#fff" /><rect x="2.500" y="2.500" width="9" height="6" fill="#fff" /><path d="M18 3.500v4" stroke="#fff" strokeWidth="1.500" /></Glyph></Slot>
      <Slot $w={27}><Glyph width="16" height="16" fill="none" stroke="#fff" strokeWidth="1.200"><path d="M.7 15.500A15 15 0 0 1 15.500.7" opacity=".7" /><path d="M4.500 15.500a11 11 0 0 1 11-11M8.500 15.500a7 7 0 0 1 7-7" /><circle cx="13.500" cy="14" r="1.600" fill="#fff" stroke="none" /></Glyph></Slot>
      <Slot $w={34}><Glyph width="20" height="18" fill="none" stroke="#fff" strokeWidth="1.200"><path d="M.7 6h3l4-4v14l-4-4h-3z" /><path d="M10.500 6.500q2 2.500 0 5" /><path d="M13.500 4q4 5 0 10M16.500 1q6.500 8 0 16" opacity=".5" /></Glyph></Slot>
      <Label $size={13.8}>ENG</Label>
      <Clock>4:21 PM<br />11-Aug-21</Clock>
      <Glyph width="20" height="20" fill="none" stroke="#fff" strokeWidth="1.300"><path d="M19.300 10V.7H.7v15.600h5v3.200l4-3.200H12" /><path d="M18.500 10.500q-4.500 3.500-5.500 7 5 3.500 7-1.500.5-3-1.500-5.500z" fill="#9aa3b2" /></Glyph>
      <DesktopEdge />
    </Tray>
  </Taskbar>
);

const UIDemo = () => (
  <DemoWindow>
    <DemoTitle>
      <Glyph width="19" height="16">
        <rect x=".5" y=".5" width="18" height="15" fill="#f6f6f6" stroke="#a3a8ad" /><path d="M0 1.500h19" stroke="#b7bcc2" strokeWidth="2" />
        <defs><linearGradient id="ui" x1="0" y1="0" x2="1" y2="1"><stop offset="0" stopColor="#3b6f96" /><stop offset="1" stopColor="#4fae6c" /></linearGradient></defs>
        <rect x="2" y="3" width="8" height="11" fill="url(#ui)" /><path d="M16 3v7" stroke="#5aa6a0" strokeWidth="2" />
      </Glyph>
      <Label $ml={6} $size={14.2}>UIDemo</Label>
      <TitleControls>
        <Glyph width="130" height="13" fill="none" stroke="#000">
          <path d="M0 5.500h12" /><rect x="58.500" y=".5" width="11" height="12" stroke="#cbcbcb" /><path d="m117 .5 12 12M129 .5l-12 12" />
        </Glyph>
      </TitleControls>
    </DemoTitle>
    <DemoHeader>
      <Label $arial $size={17.5}>08-11-2021</Label>
      <Logo>UiPath</Logo>
      <TimeLabel>04:21:36 PM</TimeLabel>
    </DemoHeader>
    <DemoBody>
      <Panel>
        <Heading $mt={6} $ml={13.5}>Transaction</Heading>
        <Option $mt={0} $ml={33} $gap={8}><Radio $on />Deposit</Option>
        <Option $mt={16} $ml={33} $gap={8} $up><Radio />Withdrawal</Option>
        <Option $mt={15} $ml={33} $gap={8} $up><Radio />Split Deposit</Option>
        <Heading $mt={14} $ml={17.5}>Configuration</Heading>
        <Option $mt={6} $ml={33} $gap={6}><Check />Use Cash Count</Option>
        <SubBox>
          <Option $mt={7} $ml={9} $gap={8}><Radio $dim $on />Use Piece Count</Option>
          <Option $mt={6} $ml={9} $gap={8} $up><Radio $dim />Use Amount</Option>
          <Option $mt={5} $ml={9} $gap={8} $up><Radio $dim />Use Both</Option>
          <Option $mt={8} $ml={4} $gap={7} $up><Check $dim />Reverse Denomination</Option>
          <Option $mt={5} $ml={4} $gap={7}>
            <Check $dim><Glyph width="13" height="12"><path d="m1.500 6.500 4 4 6-9.500" fill="none" stroke="#707070" strokeWidth="2.400" /></Glyph></Check>
            Eliminate $2
          </Option>
        </SubBox>
        <Heading $mt={12} $ml={19.5}>Scale</Heading>
        <SliderSlot>
          <Glyph width="150" height="32">
            <rect x=".5" y="8.500" width="148" height="4" fill="#e7eaea" stroke="#d6d6d6" />
            <path d="M69 .5h12v14l-6 6-6-6z" fill="#f0f0f0" stroke="#d9d9d9" />
            <path d="M.75 25v5M37.500 25v4M74.500 25v4M111.500 25v4M148 25v5" stroke="#e4e4e4" strokeWidth="1.500" />
          </Glyph>
        </SliderSlot>
        <Option $mt={22} $ml={34} $gap={6}><Check />Graphical label</Option>
        <Option $mt={20} $ml={34} $gap={6}><Check />Enable training tip</Option>
        <Option $mt={20} $ml={34} $gap={6}><Check />Enable additional icon</Option>
        <Option $mt={21} $ml={34} $gap={6} $up><Check />Change window title</Option>
        <Option $mt={21} $ml={34} $gap={6}><Check />Show Excluding</Option>
        <Button $w={150} $h={42} $kind="exit">Exit</Button>
      </Panel>
      <Form>
        <FormTitle>Deposit transaction</FormTitle>
        <Line $mt={18} $pl={62.5}>
          <Label $arial $size={17.5}>Account #: 168569067</Label>
          <Label $arial $size={17.5} $ml={63}>Transaction #: 253278</Label>
        </Line>
        <Entry $mt={34} $h={28}>
          <EntryLabel>Cash In</EntryLabel><Input />
          <DimSlot><Button $w={100} $h={28} $kind="dim">Cash Count</Button></DimSlot>
        </Entry>
        <Entry $mt={20} $h={29}><EntryLabel $low>On Us Check</EntryLabel><Input /></Entry>
        <Entry $mt={20} $h={29}><EntryLabel $low>Not On Us Check</EntryLabel><Input /></Entry>
        <Line $mt={97} $pl={46.5}>
          <Label $arial $size={17.5}>Total deposit</Label>
          <Label $arial $size={17.5} $ml={136.5}>$0.00</Label>
        </Line>
        <Grid>
          <GridHead><GridHeadCell>Type</GridHeadCell><GridHeadCell>Amount</GridHeadCell><GridHeadCell /></GridHead>
          <GridRow><GridCell>Cash</GridCell><GridCell>0.00</GridCell><GridCell /></GridRow>
          <GridRow><GridCell>Check</GridCell><GridCell>0.00</GridCell><GridCell /></GridRow>
          <GridRow><GridCell /><GridCell /><GridCell /></GridRow>
        </Grid>
        <Actions>
          <Button $w={100} $h={39}>Cancel</Button>
          <Button $w={100} $h={39}>Accept</Button>
        </Actions>
      </Form>
    </DemoBody>
  </DemoWindow>
);

const MeetingView = () => (
  <Meeting>
    <MeetingHead>
      <Label $size={16.8}>Dev Meeting</Label>
      <Label $size={13.2} $ls={-0.2} $ml={19.5}>04:03:57</Label>
      <Minimise />
    </MeetingHead>
    <Avatar>NY</Avatar>
    <CallBar>
      <CallButton><Glyph width="20" height="19"><path d="M2.500 2h8.500q2 0 2 2v10.500q0 2-2 2H3q-2.500 0-2.500-2V4q0-2 2-2zM14.500 7 19.500 3v12l-5-3.500z" fill="#fff" /><path d="M0 0 20 18" stroke="#373737" strokeWidth="4" /><path d="m.5 0 19 18" stroke="#fff" strokeWidth="1.300" /></Glyph></CallButton>
      <CallButton><Glyph width="14" height="19"><rect x="3.500" width="7" height="13.500" rx="3.500" fill="#fff" /><path d="M.7 8.500v1.500a6.300 6 0 0 0 12.600 0V8.500M7 16v3" fill="none" stroke="#fff" strokeWidth="1.200" /></Glyph></CallButton>
      <CallButton><Glyph width="19" height="15" fill="none" stroke="#fff" strokeWidth="1.300"><rect x=".7" y=".7" width="17.600" height="13.600" rx="2" /><path d="m6.300 4.300 6.400 6.400M12.700 4.300l-6.400 6.400" /></Glyph></CallButton>
      <CallButton $end><Glyph width="20" height="10"><path d="M0 6.500Q1 0 10 0t10 6.500Q20 9 18.500 9L14.500 8q-.8-.5-.8-3-3.700-1.500-7.400 0 0 2.500-.8 3l-4 1Q0 9 0 6.500z" fill="#fff" /></Glyph></CallButton>
    </CallBar>
    <Handle />
  </Meeting>
);

export default function App() {
  return (
    <>
      <GlobalStyle />
      <Screen>
        <Explorer />
        <TaskbarView />
        <UIDemo />
        <MeetingView />
      </Screen>
    </>
  );
}
